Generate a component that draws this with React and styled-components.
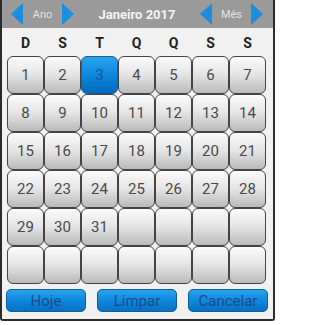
import styled, {createGlobalStyle} from 'styled-components';

const GlobalStyle = createGlobalStyle`
    html, body {
        margin: 0;
        padding: 0;
        background: #ffffff;
    }
    * {
        box-sizing: border-box;
    }
`;

const Frame = styled.div`
    width: 275px;
    height: 321px;
    border: 2px solid #2b2b2b;
    border-top: none;
    border-radius: 0 0 3px 3px;
    background: #f1f1f1;
    font-family: Roboto, "Liberation Sans", sans-serif;
    display: flex;
    flex-direction: column;
`;

const Header = styled.div`
    height: 28px;
    background: #9a9a9a;
    display: flex;
    align-items: center;
    padding: 0 10px 0 9px;
`;

const Nav = styled.div`
    width: 63px;
    display: flex;
    align-items: center;
`;

const NavLabel = styled.span`
    flex: 1;
    text-align: center;
    font-size: 11px;
    color: #e2e2e2;
`;

const Title = styled.div`
    flex: 1;
    text-align: center;
    font-size: 13px;
    font-weight: 700;
    color: #f4f4f4;
`;

const DayRow = styled.div`
    display: grid;
    grid-template-columns: repeat(7, 37px);
    padding: 0 6px 0 5px;
    height: 28px;
    align-items: center;
`;

const DayName = styled.div`
    text-align: center;
    font-size: 14px;
    font-weight: 700;
    color: #222;
    padding-top: 2px;
`;

const Grid = styled.div`
    display: grid;
    grid-template-columns: repeat(7, 37px);
    grid-auto-rows: 38px;
    padding: 0 6px 0 5px;
`;

const Cell = styled.div`
    display: flex;
    align-items: center;
    justify-content: center;
    border: 1px solid ${(p) => (p.$selected ? '#1b5f98' : '#444')};
    border-radius: 6px;
    font-size: 15px;
    color: ${(p) => (p.$selected ? '#0b5a9e' : '#4a4a4a')};
    background: ${(p) =>
        p.$selected
            ? 'linear-gradient(#2aa3ef, #0b84dc 55%, #0069ba)'
            : 'linear-gradient(#fbfbfb, #e4e4e4 50%, #bababa)'};
`;

const Actions = styled.div`
    display: flex;
    gap: 11px;
    padding: 0 0 0 4px;
    margin-top: 5px;
`;

const ActionButton = styled.button`
    width: 80px;
    height: 23px;
    padding: 0;
    border: 1px solid #0d5d9f;
    border-radius: 5px;
    background: linear-gradient(#2aa3ef, #0c86dd 55%, #0b6fbf);
    color: #1a4c86;
    font-family: Roboto, "Liberation Sans", sans-serif;
    font-size: 15px;
    cursor: pointer;
`;

const Arrow = ({dir}) => (
    <svg width="12" height="22" viewBox="0 0 12 22">
        <polygon
            points={dir === 'left' ? '12,0 0,11 12,22' : '0,0 12,11 0,22'}
            fill="#1a8fe2"
        />
    </svg>
);

const dayNames = ['D', 'S', 'T', 'Q', 'Q', 'S', 'S'];

const cells = Array.from({length: 42}, (_, i) => (i < 31 ? i + 1 : null));

export default function App() {
    return (
        <>
            <GlobalStyle />
            <Frame>
                <Header>
                    <Nav>
                        <Arrow dir="left" />
                        <NavLabel>Ano</NavLabel>
                        <Arrow dir="right" />
                    </Nav>
                    <Title>Janeiro 2017</Title>
                    <Nav>
                        <Arrow dir="left" />
                        <NavLabel>Mês</NavLabel>
                        <Arrow dir="right" />
                    </Nav>
                </Header>
                <DayRow>
                    {dayNames.map((d, i) => (
                        <DayName key={i}>{d}</DayName>
                    ))}
                </DayRow>
                <Grid>
                    {cells.map((n, i) => (
                        <Cell key={i} $selected={n === 3}>
                            {n}
                        </Cell>
                    ))}
                </Grid>
                <Actions>
                    <ActionButton>Hoje</ActionButton>
                    <ActionButton>Limpar</ActionButton>
                    <ActionButton>Cancelar</ActionButton>
                </Actions>
            </Frame>
        </>
    );
}
